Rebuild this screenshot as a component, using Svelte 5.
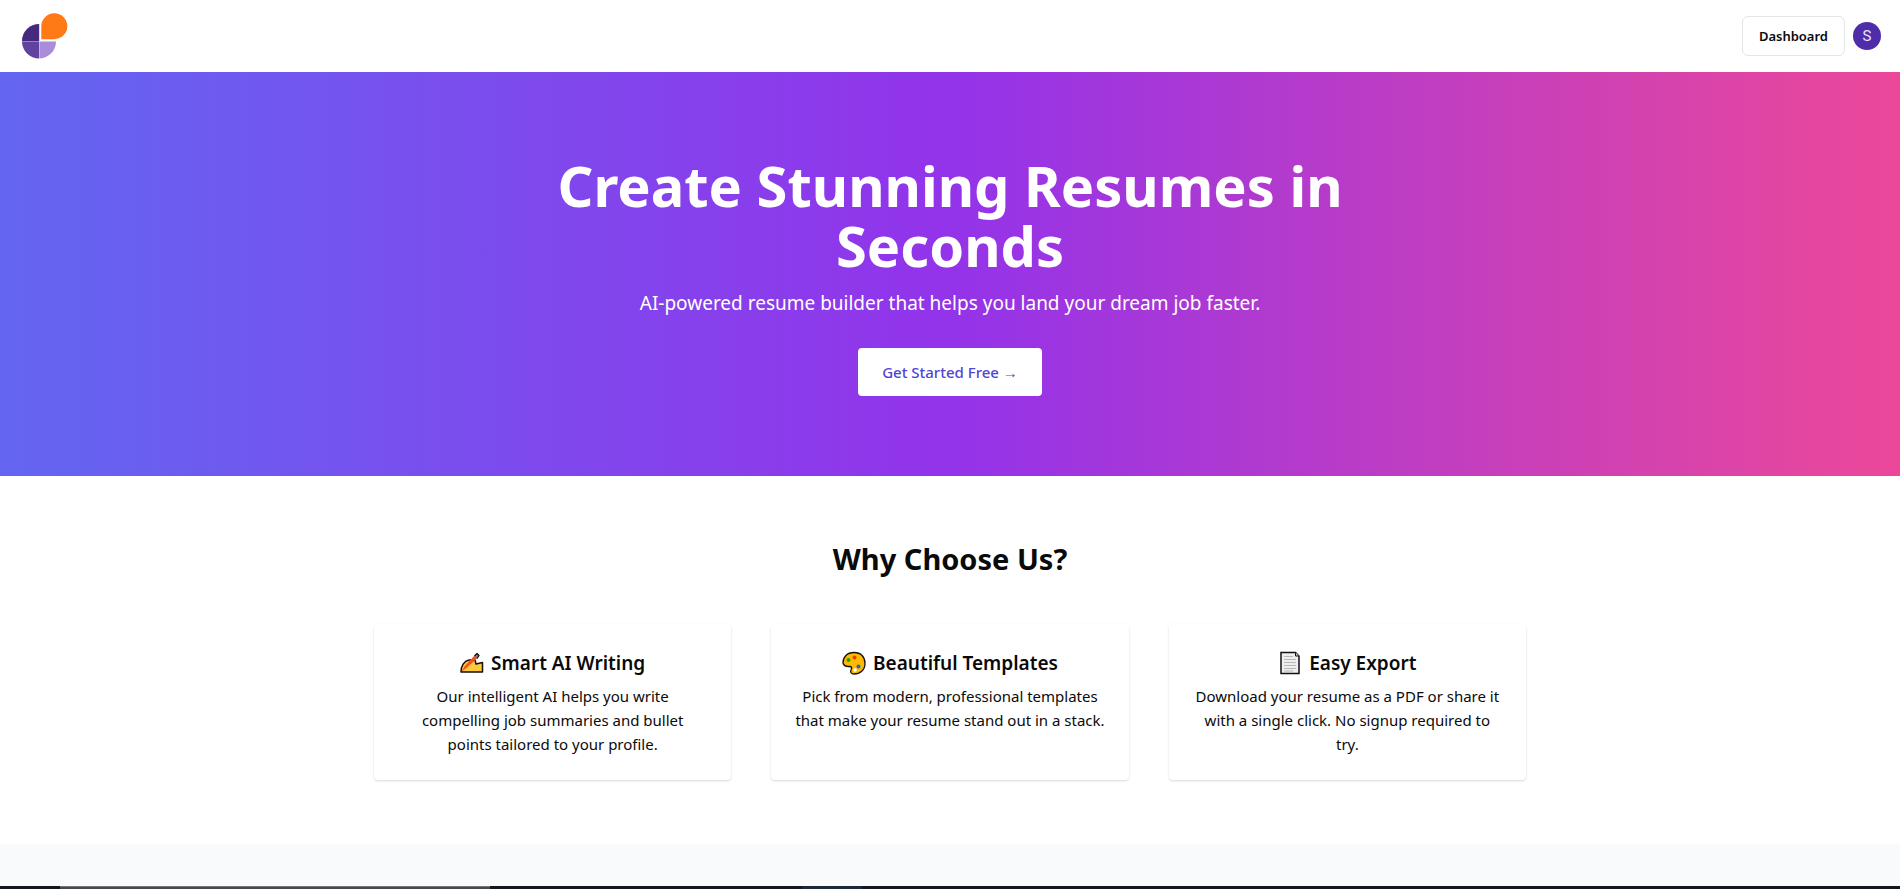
<script>
  const features = [
    { icon: 'writing', title: 'Smart AI Writing', text: 'Our intelligent AI helps you write compelling job summaries and bullet points tailored to your profile.' },
    { icon: 'palette', title: 'Beautiful Templates', text: 'Pick from modern, professional templates that make your resume stand out in a stack.' },
    { icon: 'page', title: 'Easy Export', text: 'Download your resume as a PDF or share it with a single click. No signup required to try.' }
  ];
</script>

<div class="page">
  <header>
    <a class="logo" href="#home" aria-label="Home">
      <svg width="48" height="48" viewBox="0 0 48 48" aria-hidden="true">
        <path d="M19.2 12v17.200H2A17 17 0 0 1 19.200 12z" fill="#46297c" />
        <path d="M2 29.500h17.200v17a17 17 0 0 1-17.200-17z" fill="#61429f" />
        <path d="M19.500 29.500H36a17 17 0 0 1-16.500 17z" fill="#a98ddb" />
        <path d="M21.300 27.200V14.400A13 13 0 1 1 34.300 27.200z" fill="#ff7917" />
      </svg>
    </a>
    <div class="account">
      <button class="dashboard">Dashboard</button>
      <button class="avatar" aria-label="Account">S</button>
    </div>
  </header>

  <section class="hero">
    <h1>Create Stunning Resumes in Seconds</h1>
    <p>AI-powered resume builder that helps you land your dream job faster.</p>
    <button class="start">Get Started Free →</button>
  </section>

  <section class="why">
    <h2>Why Choose Us?</h2>
    <div class="cards">
      {#each features as f}
        <article>
          <h3>
            {#if f.icon === 'writing'}
              <svg width="24" height="24" viewBox="0 0 24 24" aria-hidden="true">
                <path d="M1 21c0-6 3-11 8-12l6 0 1 4 6.500-1.500V21z" fill="#ffc83d" stroke="#111" stroke-width="1.500" stroke-linejoin="round" />
                <path d="M1.500 20.500l3-5L15 4l3 2.500L6.500 17z" fill="#f4511e" />
                <path d="M14.500 5l2.500-2.500 2 2L17 7.500" fill="#888" stroke="#111" stroke-width="1.300" stroke-linejoin="round" />
                <path d="M9 14l4 1-5 3" fill="#ffc83d" />
              </svg>
            {:else if f.icon === 'palette'}
              <svg width="24" height="24" viewBox="0 0 24 24" aria-hidden="true">
                <path d="M1 12C1 6 5 1.500 12 1.500S23 6 23 12.500 18 23 12 23c-3 0-4-2-3-4s1-3.500-1.500-3.500S2 16 1 12z" fill="#ffb900" stroke="#111" stroke-width="1.300" />
                <circle cx="12.500" cy="6.500" r="2" fill="#f03a17" />
                <circle cx="6.500" cy="9" r="2" fill="#16a51b" />
                <circle cx="16.500" cy="15.500" r="2" fill="#2866b0" />
                <circle cx="13" cy="19" r="1.800" fill="#fff" />
              </svg>
            {:else}
              <svg width="24" height="24" viewBox="0 0 24 24" aria-hidden="true">
                <path d="M3 1.500h14.500l3.500 3.500v17.500H3z" fill="#eee" stroke="#111" stroke-width="1.500" />
                <path d="M17.500 1.500V5H21" fill="#ccc" stroke="#111" />
                <path d="M6 5.500h9M6 8.500h12M6 11.500h12M6 14.500h12M6 17.500h12M6 20h9" stroke="#b8b8b8" />
              </svg>
            {/if}
            {f.title}
          </h3>
          <p>{f.text}</p>
        </article>
      {/each}
    </div>
  </section>

  <div class="next"></div>
  <div class="taskbar"><span class="search"></span><span class="active"></span></div>
</div>

<style>
  :global(body) { margin: 0; background: #fff; }
  .page {
    display: flex;
    flex-direction: column;
    min-height: 100vh;
    font-family: "Segoe UI", "Noto Sans", sans-serif;
    font-size: 15px;
    line-height: 24px;
    color: #0a0a0a;
  }
  h1, h2, h3, p { margin: 0; }
  button { font-family: inherit; border: 0; padding: 0; cursor: pointer; }
  header {
    display: flex;
    align-items: center;
    justify-content: space-between;
    box-sizing: border-box;
    height: 72px;
    padding: 0 19px 0 20px;
  }
  .logo, .logo svg { display: block; }
  .account { display: flex; align-items: center; gap: 8px; }
  .dashboard {
    height: 40px;
    padding: 0 16px;
    border: 1px solid #e5e5ec;
    border-radius: 6px;
    background: #fff;
    color: #0a0a0a;
    font-size: 13px;
    font-weight: 600;
  }
  .avatar {
    width: 28px;
    height: 28px;
    border-radius: 50%;
    background: #4f2da8;
    color: #e9e2fa;
    font-family: Roboto, sans-serif;
    font-size: 15px;
  }
  .hero {
    display: flex;
    flex-direction: column;
    align-items: center;
    padding: 83px 24px 80px;
    background: linear-gradient(to right, #6366f1, #9333ea, #ec4899);
    color: #fff;
    text-align: center;
  }
  h1 { max-width: 896px; font-size: 56px; line-height: 60px; font-weight: 700; }
  .hero p { margin: 14px 0 31px; font-size: 19px; line-height: 28px; }
  .start {
    height: 48px;
    padding: 0 24px;
    border-radius: 4px;
    background: #fff;
    color: #4f46d5;
    font-size: 15px;
    font-weight: 500;
  }
  .why { padding: 65px 24px 64px; text-align: center; }
  h2 { font-size: 29px; line-height: 36px; font-weight: 700; }
  .cards {
    display: grid;
    grid-template-columns: repeat(3, 1fr);
    gap: 40px;
    max-width: 1152px;
    margin: 47px auto 0;
  }
  article {
    padding: 25px 24px 24px;
    border-radius: 4px;
    box-shadow: 0 1px 3px rgb(0 0 0 / 10%), 0 1px 2px rgb(0 0 0 / 6%);
  }
  h3 {
    display: flex;
    align-items: center;
    justify-content: center;
    gap: 7px;
    margin-bottom: 7px;
    font-size: 19px;
    line-height: 28px;
    font-weight: 600;
  }
  .next { flex: 1; background: #f8fafc; }
  .taskbar { display: flex; height: 3px; padding-left: 60px; background: #14171c; }
  .search { width: 430px; background: #48484d; border-top: 1px solid #777; box-sizing: border-box; }
  .active { width: 60px; margin-left: 312px; background: #1c2a38; }
</style>
